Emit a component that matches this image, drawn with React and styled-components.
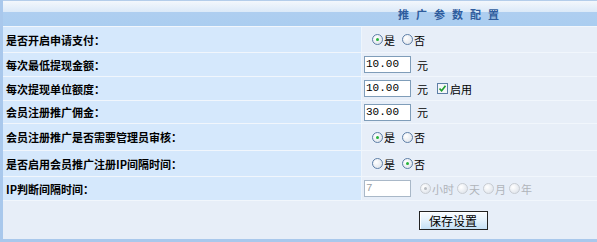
import React from "react";
import styled, { createGlobalStyle } from "styled-components";

const GlobalStyle = createGlobalStyle`
  html, body {
    margin: 0;
    padding: 0;
    background: #ffffff;
  }
  body {
    font-family: "Noto Sans CJK SC", "DejaVu Sans", sans-serif;
    font-size: 11px;
  }
`;

// the table is wider than the visible window: title and button sit centred near x=450
const Frame = styled.div`
  border-left: 3px solid #a9c8ec;
  border-bottom: 3px solid #a9c8ec;
  background: #e7eef8;
`;

const Header = styled.div`
  height: 26px;
  border-top: 1px solid #b4cdea;
  box-sizing: border-box;
  background: linear-gradient(
    #f3f7fc 0,
    #dbe9f8 45%,
    #aecef0 46%,
    #aacdf0 100%
  );
  display: flex;
  align-items: center;
  justify-content: center;
  padding: 1px 0 0 304px;
  color: #2f5c9d;
  font-weight: bold;
  font-size: 11px;
  letter-spacing: 7px;
`;

const Row = styled.div`
  display: grid;
  grid-template-columns: 359px 1fr;
  height: ${(p) => p.$h}px;
  box-sizing: border-box;
  border-top: 1px solid #f1f6fc;
`;

const Label = styled.div`
  background: #d5e8fc;
  border-right: 1px solid #eef5fc;
  display: flex;
  align-items: center;
  padding-left: 3px;
  font-weight: bold;
  color: #000;
  white-space: nowrap;
`;

const Field = styled.div`
  background: #e7eef8;
  display: flex;
  align-items: center;
  padding-left: 2px;
  color: ${(p) => (p.$muted ? "#b0b4ba" : "#000")};
  white-space: nowrap;
  overflow: hidden;
`;

const Input = styled.div`
  width: 47px;
  height: 17px;
  box-sizing: border-box;
  border: 1px solid ${(p) => (p.$disabled ? "#a9b8c8" : "#7f9db9")};
  background: #fff;
  font-family: "Liberation Mono", "DejaVu Sans Mono", monospace;
  font-size: 11px;
  line-height: 15px;
  padding-left: 1px;
  color: ${(p) => (p.$disabled ? "#9aa0a6" : "#000")};
`;

const Unit = styled.span`
  margin-left: 6px;
`;

const RadioDot = styled.span`
  display: inline-block;
  width: 11px;
  height: 11px;
  box-sizing: border-box;
  border-radius: 50%;
  border: 1px solid ${(p) => (p.$muted ? "#c8ccd2" : "#5d7ea6")};
  background: radial-gradient(circle at 35% 35%, #ffffff 0, #e4e8ee 70%, #cfd6df 100%);
  position: relative;
  margin-left: ${(p) => p.$ml}px;
  margin-right: 1px;
  &::after {
    content: "";
    display: ${(p) => (p.$on ? "block" : "none")};
    position: absolute;
    left: 3px;
    top: 3px;
    width: 3px;
    height: 3px;
    border-radius: 50%;
    background: ${(p) => (p.$muted ? "#b8bcc2" : "#25b33a")};
  }
`;

const Check = styled.span`
  display: inline-block;
  width: 11px;
  height: 11px;
  box-sizing: border-box;
  border: 1px solid #5d7ea6;
  background: #f4f6f8;
  margin-left: 9px;
  margin-right: 2px;
  position: relative;
  svg {
    position: absolute;
    left: 1px;
    top: 1px;
  }
`;

const Footer = styled.div`
  height: 39px;
  border-top: 1px solid #f1f6fc;
  box-sizing: border-box;
  display: flex;
  justify-content: center;
  align-items: flex-start;
  padding: 10px 0 0 306px;
`;

const Button = styled.button`
  width: 69px;
  height: 19px;
  padding: 0;
  border: 1px solid #222;
  background: linear-gradient(#f8fcff 0, #e6f2fc 45%, #c5e0f6 100%);
  font-family: "Noto Sans CJK SC", sans-serif;
  font-size: 12px;
  line-height: 15px;
  color: #000;
  box-shadow: inset 1px 1px 0 #fff;
`;

const Radio = ({ on, label, ml = 3, muted }) => (
  <>
    <RadioDot $on={on} $ml={ml} $muted={muted} />
    <span>{label}</span>
  </>
);

const CheckIcon = () => (
  <svg width="7" height="7" viewBox="0 0 7 7">
    <path d="M0.5 3.5 L2.6 5.8 L6.5 0.8" fill="none" stroke="#1f9e2e" strokeWidth="1.6" />
  </svg>
);

export default function App() {
  return (
    <>
      <GlobalStyle />
      <Frame>
        <Header>推广参数配置</Header>
        <Row $h={26}>
          <Label>是否开启申请支付：</Label>
          <Field>
            <Radio on label="是" ml={8} />
            <Radio label="否" ml={7} />
          </Field>
        </Row>
        <Row $h={24}>
          <Label>每次最低提现金额：</Label>
          <Field>
            <Input>10.00</Input>
            <Unit>元</Unit>
          </Field>
        </Row>
        <Row $h={24}>
          <Label>每次提现单位额度：</Label>
          <Field>
            <Input>10.00</Input>
            <Unit>元</Unit>
            <Check>
              <CheckIcon />
            </Check>
            <span>启用</span>
          </Field>
        </Row>
        <Row $h={23}>
          <Label>会员注册推广佣金：</Label>
          <Field>
            <Input>30.00</Input>
            <Unit>元</Unit>
          </Field>
        </Row>
        <Row $h={27}>
          <Label>会员注册推广是否需要管理员审核：</Label>
          <Field>
            <Radio on label="是" ml={8} />
            <Radio label="否" ml={7} />
          </Field>
        </Row>
        <Row $h={26}>
          <Label>是否启用会员推广注册IP间隔时间：</Label>
          <Field>
            <Radio label="是" ml={8} />
            <Radio on label="否" ml={7} />
          </Field>
        </Row>
        <Row $h={24}>
          <Label>IP判断间隔时间：</Label>
          <Field $muted>
            <Input $disabled>7</Input>
            <Radio on muted label="小时" ml={9} />
            <Radio muted label="天" ml={3} />
            <Radio muted label="月" ml={3} />
            <Radio muted label="年" ml={3} />
          </Field>
        </Row>
        <Footer>
          <Button>保存设置</Button>
        </Footer>
      </Frame>
    </>
  );
}
